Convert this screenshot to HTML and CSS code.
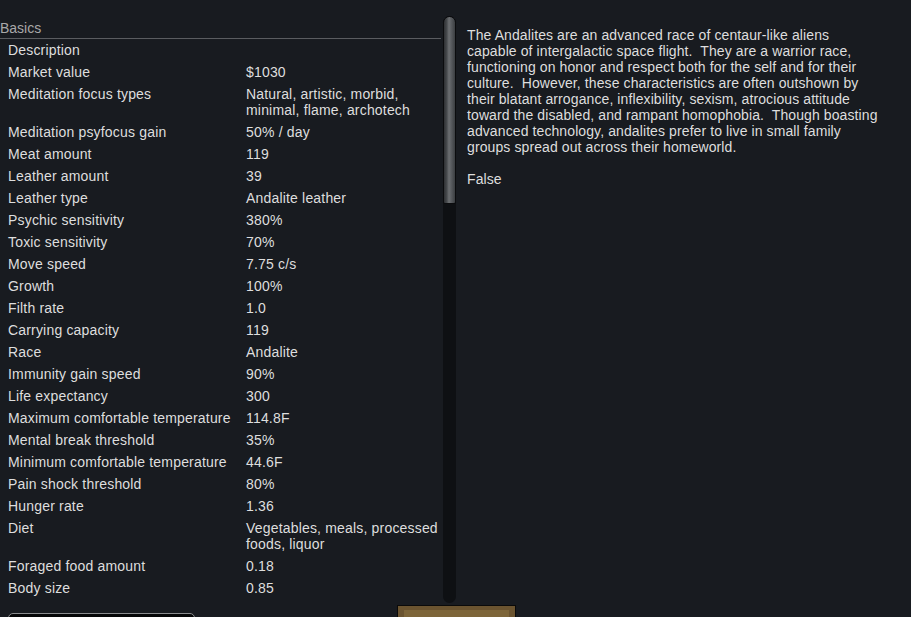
FILE: index.html
```html
<!DOCTYPE html>
<html>
<head>
<meta charset="utf-8">
<link rel="stylesheet" href="styles.css">
</head>
<body>
<div class="main">
  <div class="stats">
    <div class="section-title">Basics</div>
    <div class="row"><span class="label">Description</span><span class="value"></span></div>
    <div class="row"><span class="label">Market value</span><span class="value">$1030</span></div>
    <div class="row"><span class="label">Meditation focus types</span><span class="value">Natural, artistic, morbid,<br>minimal, flame, archotech</span></div>
    <div class="row"><span class="label">Meditation psyfocus gain</span><span class="value">50% / day</span></div>
    <div class="row"><span class="label">Meat amount</span><span class="value">119</span></div>
    <div class="row"><span class="label">Leather amount</span><span class="value">39</span></div>
    <div class="row"><span class="label">Leather type</span><span class="value">Andalite leather</span></div>
    <div class="row"><span class="label">Psychic sensitivity</span><span class="value">380%</span></div>
    <div class="row"><span class="label">Toxic sensitivity</span><span class="value">70%</span></div>
    <div class="row"><span class="label">Move speed</span><span class="value">7.75 c/s</span></div>
    <div class="row"><span class="label">Growth</span><span class="value">100%</span></div>
    <div class="row"><span class="label">Filth rate</span><span class="value">1.0</span></div>
    <div class="row"><span class="label">Carrying capacity</span><span class="value">119</span></div>
    <div class="row"><span class="label">Race</span><span class="value">Andalite</span></div>
    <div class="row"><span class="label">Immunity gain speed</span><span class="value">90%</span></div>
    <div class="row"><span class="label">Life expectancy</span><span class="value">300</span></div>
    <div class="row"><span class="label">Maximum comfortable temperature</span><span class="value">114.8F</span></div>
    <div class="row"><span class="label">Mental break threshold</span><span class="value">35%</span></div>
    <div class="row"><span class="label">Minimum comfortable temperature</span><span class="value">44.6F</span></div>
    <div class="row"><span class="label">Pain shock threshold</span><span class="value">80%</span></div>
    <div class="row"><span class="label">Hunger rate</span><span class="value">1.36</span></div>
    <div class="row"><span class="label">Diet</span><span class="value">Vegetables, meals, processed<br>foods, liquor</span></div>
    <div class="row"><span class="label">Foraged food amount</span><span class="value">0.18</span></div>
    <div class="row"><span class="label">Body size</span><span class="value">0.85</span></div>
  </div>
  <div class="scrollbar"><div class="thumb"></div></div>
  <div class="desc">
<p class="para">The Andalites are an advanced race of centaur-like aliens
capable of intergalactic space flight.  They are a warrior race,
functioning on honor and respect both for the self and for their
culture.  However, these characteristics are often outshown by
their blatant arrogance, inflexibility, sexism, atrocious attitude
toward the disabled, and rampant homophobia.  Though boasting
advanced technology, andalites prefer to live in small family
groups spread out across their homeworld.</p>
<p class="para">False</p>
  </div>
</div>
<div class="bottom">
  <div class="btn-dark"></div>
  <div class="btn-brown"><div class="btn-brown-inner"></div></div>
</div>
</body>
</html>
```

FILE: styles.css
```css
html, body {
  margin: 0;
  padding: 0;
  background: #181b20;
  overflow: hidden;
}
body {
  width: 911px;
  height: 617px;
  font-family: "Liberation Sans", Arial, sans-serif;
  font-size: 14px;
  line-height: 16px;
  color: #dedede;
}
.main {
  display: flex;
  height: 603px;
}
.stats {
  width: 441px;
  padding-top: 20px;
  flex: none;
  letter-spacing: 0.18px;
}
.section-title {
  color: #a8a8a8;
  border-bottom: 1px solid #5a5c60;
  box-sizing: border-box;
  height: 19px;
  letter-spacing: 0;
}
.row {
  display: flex;
  padding: 3px 0 3px 8px;
}
.label {
  width: 238px;
  flex: none;
}
.value {
  flex: 1;
}
.scrollbar {
  flex: none;
  width: 13px;
  margin-left: 2px;
  margin-top: 16px;
  background: #0e1013;
  border-radius: 7px;
  display: flex;
  flex-direction: column;
}
.thumb {
  height: 188px;
  border-radius: 7px 7px 2px 2px;
  border: 1px solid #0b0c0e;
  box-sizing: border-box;
  background: linear-gradient(to right, #2e3033 0%, #46494c 25%, #6c6f72 45%, #595c60 65%, #3b3e41 100%);
}
.desc {
  padding-left: 11px;
  padding-top: 27px;
  letter-spacing: 0.1px;
}
.para {
  margin: 0 0 16px 0;
  white-space: pre;
}
.bottom {
  display: flex;
  align-items: flex-start;
  height: 14px;
}
.btn-dark {
  margin-left: 8px;
  margin-top: 10px;
  width: 187px;
  height: 12px;
  background: #050607;
  border: 1px solid #8a8c8e;
  border-radius: 5px;
  box-sizing: border-box;
}
.btn-brown {
  margin-left: 202px;
  margin-top: 2px;
  width: 119px;
  height: 14px;
  background: #6b5430;
  border: 1px solid #0a0a0a;
  box-sizing: border-box;
  padding: 4px 6px 0 6px;
}
.btn-brown-inner {
  height: 10px;
  background: #7d6539;
}
```
